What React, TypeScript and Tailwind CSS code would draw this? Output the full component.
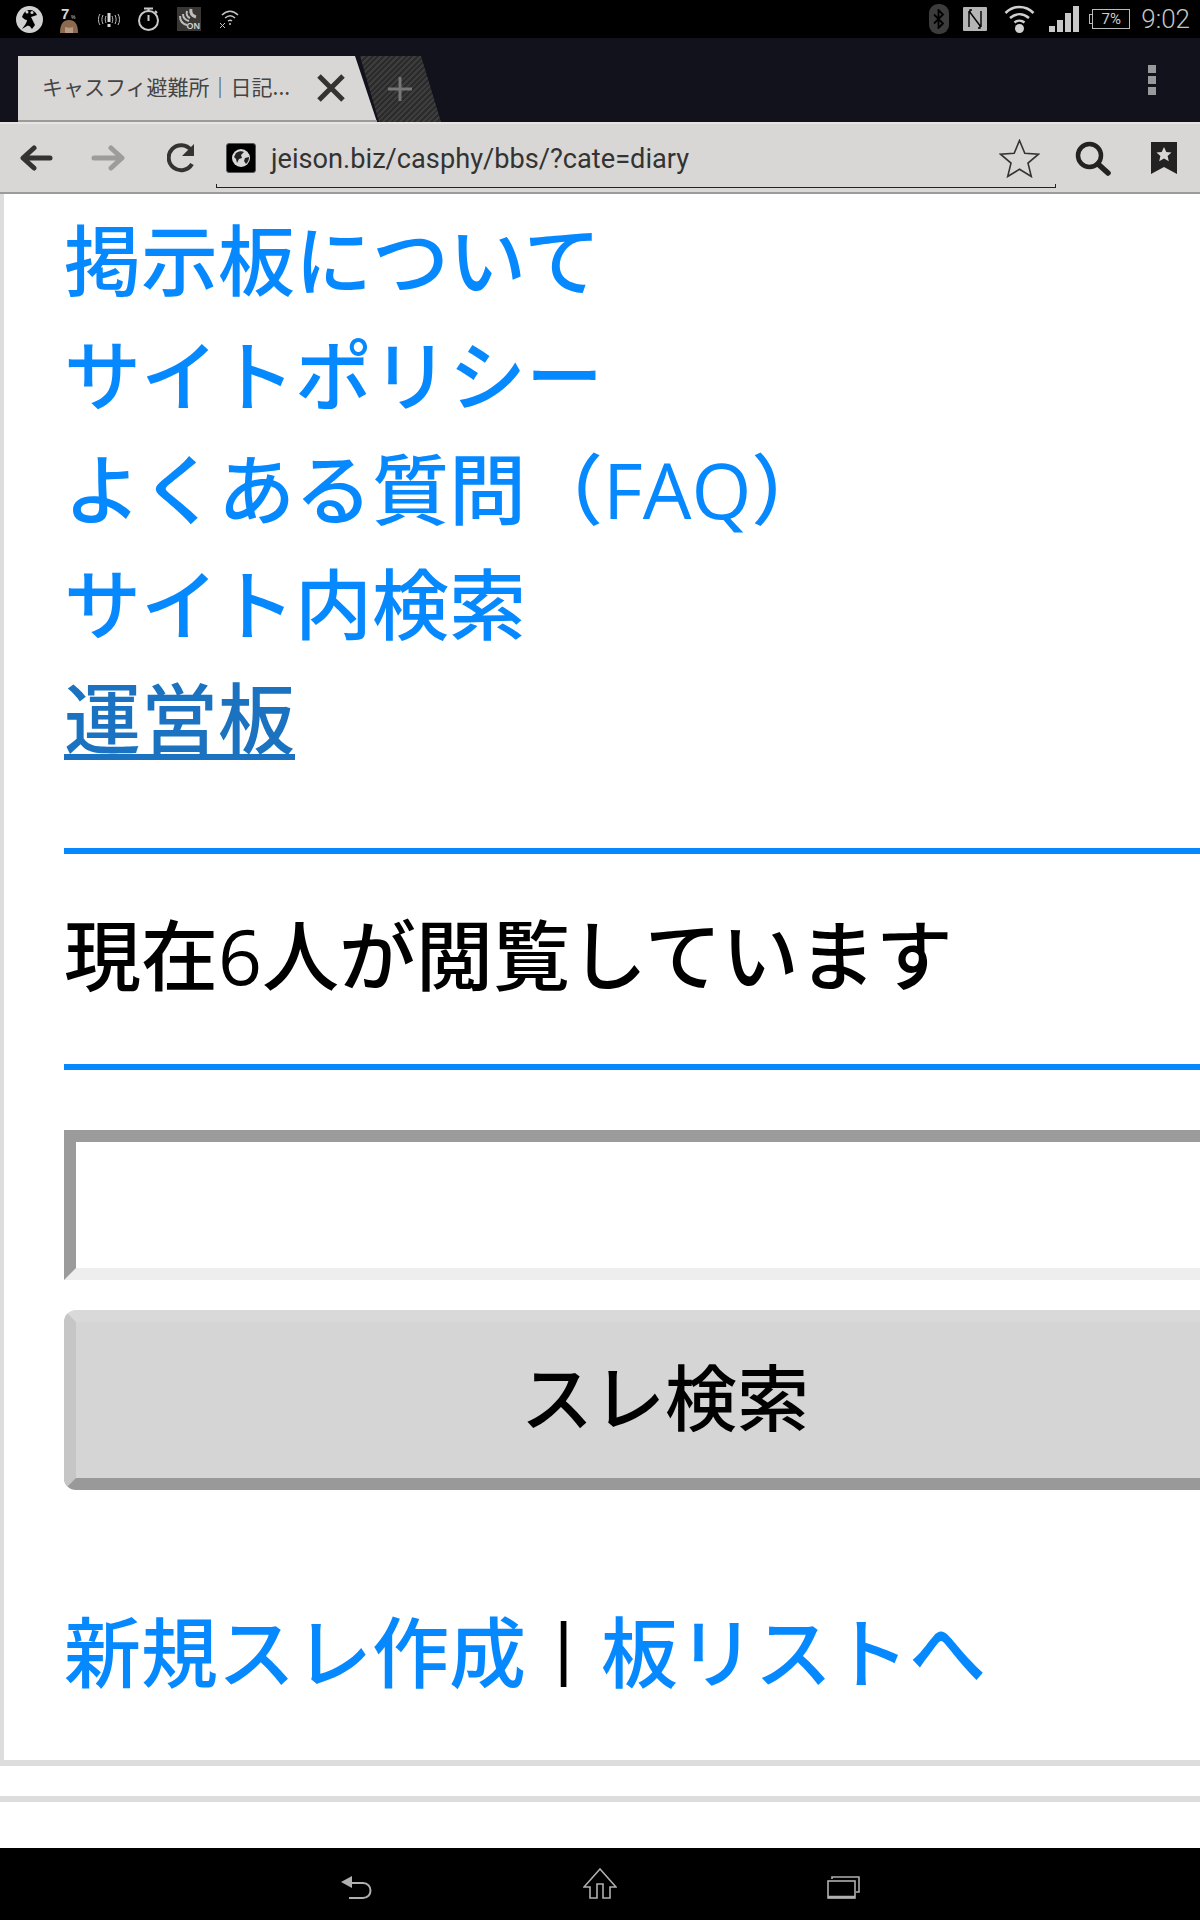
const cjk = "font-['Open_Sans','Noto_Sans_CJK_JP',sans-serif]";

function StatusLeft() {
  return (
    <div className="flex items-center pl-[16px]">
      {/* app icon */}
      <svg width="27" height="27" viewBox="0 0 27 27">
        <circle cx="13.5" cy="13.5" r="13.5" fill="#d0d0d0" />
        <path d="M6 11c2-5 4-7 8-7 3 0 6 2 7 5l-6 2 4 8-3 4c-2-3-3-4-5-3l-5 3c2-3 5-6 5-9-2 0-3-1-5-3z" fill="#000" />
        <circle cx="11" cy="6" r="1.5" fill="#d0d0d0" />
        <circle cx="16" cy="6.5" r="1.5" fill="#d0d0d0" />
      </svg>
      {/* 7% with character */}
      <svg className="ml-[17px]" width="18" height="27" viewBox="0 0 18 27">
        <text x="1" y="13" fontSize="15" fontWeight="700" fill="#d8d8d8" fontFamily="Liberation Sans, sans-serif">7</text>
        <text x="11" y="13" fontSize="5" fill="#d8d8d8" fontFamily="Liberation Sans, sans-serif">%</text>
        <path d="M0 27c0-9 3-13 9-13s9 4 9 13z" fill="#8c6a4f" />
        <path d="M5 27v-6c3 1 6 1 8 0v6z" fill="#b89a82" />
      </svg>
      {/* vibrate alert */}
      <svg className="ml-[19px]" width="24" height="15" viewBox="0 0 24 15" fill="none" stroke="#bdbdbd" strokeWidth="1">
        <path d="M3 2c-2 3-2 8 0 11M6 3c-1.500 3-1.500 6 0 9M9 4c-1 2-1 5 0 7M21 2c2 3 2 8 0 11M18 3c1.500 3 1.500 6 0 9M15 4c1 2 1 5 0 7" />
        <path d="M12 1v9" stroke="#d8d8d8" strokeWidth="3" />
        <path d="M12 12v3" stroke="#d8d8d8" strokeWidth="3" />
      </svg>
      {/* stopwatch */}
      <svg className="ml-[16px]" width="23" height="24" viewBox="0 0 23 24" fill="none" stroke="#c8c8c8" strokeWidth="2">
        <circle cx="11.500" cy="13.500" r="9.500" />
        <path d="M11.500 8v6M7 1.500h9M11.500 1.500v3M18 4l2 2" />
      </svg>
      {/* NFC on tile */}
      <div className="ml-[17px] relative w-[24px] h-[24px] bg-[#3a3634]">
        <svg width="24" height="24" viewBox="0 0 24 24" fill="none" stroke="#bdbdbd">
          <path d="M3 9c0 5 3 8 7 9" strokeWidth="2" />
          <path d="M6 7c0 4 2 6 6 7" strokeWidth="2" />
          <path d="M14 2c-1 4 1 7 5 8" strokeWidth="3" />
          <path d="M10 4c-1 3 0 6 3 7" strokeWidth="2" />
        </svg>
        <span className="absolute right-[1px] bottom-[0px] font-['Liberation_Sans',sans-serif] text-[9px] leading-[10px] font-bold text-[#cfcfcf]">ON</span>
      </div>
      {/* wifi hotspot */}
      <svg className="ml-[18px]" width="21" height="20" viewBox="0 0 21 20" fill="none" stroke="#c4c4c4" strokeWidth="1.500">
        <path d="M3 6c5-5 11-5 16 0M6 9c3.500-3 7-3 10 0M9 12c1.500-1 3-1 4 0" />
        <circle cx="11" cy="15" r="1" fill="#c4c4c4" stroke="none" />
        <path d="M1 14l5 5M6 14l-5 5" strokeWidth="1" />
      </svg>
    </div>
  );
}

function StatusRight() {
  return (
    <div className="flex items-center ml-auto pr-[10px]">
      {/* bluetooth */}
      <div className="w-[20px] h-[30px] rounded-[9px] bg-[#3c3c3c] flex items-center justify-center">
        <svg width="12" height="20" viewBox="0 0 12 20" fill="none" stroke="#000" strokeWidth="1.800">
          <path d="M1 5.500l9 9-4.500 4.500V1L10 5.500l-9 9" />
        </svg>
      </div>
      {/* N mark */}
      <svg className="ml-[14px]" width="24" height="24" viewBox="0 0 24 24">
        <rect x="0" y="0" width="24" height="24" rx="1" fill="#b5b5b5" />
        <path d="M6 4v16M18 4v16M6 4l12 16M9 3h-2v2M15 21h2v-2" fill="none" stroke="#000" strokeWidth="1.400" />
      </svg>
      {/* wifi */}
      <svg className="ml-[17px]" width="31" height="28" viewBox="0 0 31 28" fill="none" stroke="#d0d0d0" strokeWidth="2.500">
        <path d="M1.500 8c8-8 20-8 28 0M6 13c6-5 13-5 19 0M10.500 17.500c3-2.500 7-2.500 10 0" />
        <circle cx="15.500" cy="23.500" r="4.500" fill="#d0d0d0" stroke="none" />
      </svg>
      {/* signal */}
      <div className="ml-[14px] flex items-end gap-[2px] h-[26px]">
        <div className="w-[6px] h-[6px] bg-[#c8c8c8]" />
        <div className="w-[6px] h-[12px] bg-[#c8c8c8]" />
        <div className="w-[6px] h-[19px] bg-[#c8c8c8]" />
        <div className="w-[6px] h-[26px] bg-[#c8c8c8]" />
      </div>
      {/* battery */}
      <div className="ml-[10px] flex items-center">
        <div className="w-[3px] h-[10px] border border-r-0 border-[#bbb]" />
        <div className="w-[38px] h-[20px] border border-[#bbb] flex items-center justify-center font-['Roboto',sans-serif] text-[15px] leading-none text-[#ccc]">7%</div>
      </div>
      <span className="ml-[11px] font-['Roboto',sans-serif] font-light text-[26px] leading-none text-[#c4c4c4]">9:02</span>
    </div>
  );
}

function TabStrip() {
  return (
    <div className="flex h-[84px] pt-[18px] pl-[18px] bg-[#11121b]">
      <div className="w-[359px] h-[66px] flex items-center bg-[#d8d7d5] border-b-2 border-[#9a9a9a] [clip-path:polygon(0_0,337px_0,359px_100%,0_100%)]">
        <span className="ml-[24px] mb-[4px] w-[275px] whitespace-nowrap text-[21px] leading-none text-[#444] font-['Noto_Sans_CJK_JP',sans-serif]">キャスフィ避難所｜日記...</span>
        <svg width="28" height="28" viewBox="0 0 28 28" fill="none" stroke="#333" strokeWidth="5">
          <path d="M2 2l24 24M26 2L2 26" />
        </svg>
      </div>
      <div className="-ml-[17px] w-[81px] h-[66px] pr-[2px] flex items-center justify-center [clip-path:polygon(0_0,61px_0,81px_100%,19px_100%)] bg-[repeating-linear-gradient(135deg,#2b2b2b_0px,#2b2b2b_2px,#3d3d3d_2px,#3d3d3d_4px)]">
        <svg width="26" height="26" viewBox="0 0 26 26" stroke="#777" strokeWidth="3">
          <path d="M13 1v24M1 13h24" />
        </svg>
      </div>
      <div className="ml-auto mr-[44px] mt-[9px] flex flex-col gap-[3px]">
        <div className="w-[8px] h-[8px] bg-[#999]" />
        <div className="w-[8px] h-[8px] bg-[#999]" />
        <div className="w-[8px] h-[8px] bg-[#999]" />
      </div>
    </div>
  );
}

function Toolbar() {
  return (
    <div className="flex h-[72px] items-center bg-[#d8d7d5] border-t-2 border-[#e6e5e3] border-b-2 border-b-[#9b9b9b] relative">
      <svg className="ml-[20px]" width="33" height="28" viewBox="0 0 33 28" fill="none" stroke="#333" strokeWidth="5" strokeLinecap="round" strokeLinejoin="round">
        <path d="M30 14H4M14 4L3 14l11 10" />
      </svg>
      <svg className="ml-[38px]" width="34" height="28" viewBox="0 0 34 28" fill="none" stroke="#9c9c9c" strokeWidth="5" strokeLinecap="round" strokeLinejoin="round">
        <path d="M3 14h26M20 4l11 10-11 10" />
      </svg>
      <svg className="ml-[42px]" width="29" height="30" viewBox="0 0 29 30" fill="none" stroke="#333" strokeWidth="4">
        <path d="M25 21a12.500 12.500 0 1 1-1-14" />
        <path d="M27 1v12H15z" fill="#333" stroke="none" />
      </svg>
      <div className="ml-[30px] w-[30px] h-[30px] rounded-[3px] bg-black border border-[#555] flex items-center justify-center">
        <svg width="20" height="20" viewBox="0 0 20 20">
          <circle cx="10" cy="10" r="9" fill="#d8d8d8" />
          <path d="M5 5c3-2 6-2 8-1l-3 3 1 3-3 1-2 4-1-4-2-2zM14 10l4-1c0 3-1 5-3 7l-2-3z" fill="#222" />
        </svg>
      </div>
      <span className="ml-[15px] mt-[4px] whitespace-nowrap font-['Roboto',sans-serif] text-[27.2px] leading-none text-[#333]">jeison.biz/casphy/bbs/?cate=diary</span>
      <svg className="ml-auto" width="41" height="39" viewBox="0 0 41 39" fill="none" stroke="#333" strokeWidth="1.600" strokeLinejoin="miter">
        <path d="M20.500 1.500l5.300 12.700 13.700 1-10.500 8.900 3.300 13.400-11.800-7.200-11.800 7.200 3.300-13.400L1.500 15.200l13.700-1z" />
      </svg>
      <svg className="ml-[35px]" width="36" height="35" viewBox="0 0 36 35" fill="none" stroke="#222" strokeLinecap="round">
        <circle cx="14.500" cy="14.500" r="11.500" strokeWidth="4.500" />
        <path d="M23 23l10 9" strokeWidth="5.500" />
      </svg>
      <svg className="ml-[40px] mr-[23px]" width="26" height="32" viewBox="0 0 26 32">
        <path d="M0 0h26v32l-13-7-13 7z" fill="#222" />
        <path d="M13 5l2.300 5 5.200.500-3.900 3.500 1.200 5.200-4.800-2.700-4.800 2.700 1.200-5.200-3.900-3.500 5.200-.500z" fill="#d8d7d5" />
      </svg>
      {/* omnibox underline */}
      <div className="absolute left-[216px] top-[60px] w-[840px] h-[4px] border-b border-x border-[#222]" />
    </div>
  );
}

function PageContent() {
  const links = ['掲示板について', 'サイトポリシー', 'よくある質問（FAQ）', 'サイト内検索'];
  return (
    <div className={`flex-1 overflow-hidden bg-white font-medium ${cjk}`}>
      <div className="w-[1400px] h-[1572px] border-l-4 border-b-[6px] border-[#dddddd] pl-[60px] pt-[10px]">
        <div className="w-[1202px] text-[77px] leading-[114.500px]">
          {links.map((label) => (
            <div key={label} className="text-[#0689ff] whitespace-nowrap">{label}</div>
          ))}
          <div className="text-[#1a72c0] underline decoration-[6px] underline-offset-[6px]">運営板</div>

          <div className="mt-[71px] h-[6px] bg-[#0689ff]" />
          <div className="pt-[45px] pb-[51px] text-black whitespace-nowrap">現在6人が閲覧しています</div>
          <div className="h-[6px] bg-[#0689ff]" />

          <div className="mt-[60px] h-[150px] border-[12px] border-t-[#9b9b9b] border-l-[#9b9b9b] border-r-[#eeeeee] border-b-[#eeeeee] bg-white" />
          <div className="mt-[30px] h-[180px] pb-[6px] rounded-[12px] border-[12px] border-t-[#d9d9d9] border-l-[#c6c6c6] border-r-[#c6c6c6] border-b-[#999999] bg-[#d5d5d5] flex items-center justify-center text-[72px] text-black">スレ検索</div>

          <div className="mt-[106px] flex whitespace-nowrap text-black">
            <span className="text-[#0689ff]">新規スレ作成</span>
            <span className="-mt-[5px] w-[75px] text-center font-['Liberation_Sans',sans-serif] font-normal text-[70px]">|</span>
            <span className="text-[#0689ff]">板リストへ</span>
          </div>
        </div>
      </div>
      <div className="mt-[30px] h-[6px] bg-[#dddddd]" />
    </div>
  );
}

function NavBar() {
  return (
    <div className="h-[72px] bg-black flex items-start">
      <svg className="ml-[341px] mt-[27px]" width="32" height="24" viewBox="0 0 32 24" fill="none" stroke="#b0b0b0" strokeWidth="2">
        <path d="M10 8h12c10 0 10 15 0 15H8" />
        <path d="M0 7l11-6v12z" fill="#b0b0b0" stroke="none" />
      </svg>
      <svg className="ml-[210px] mt-[20px]" width="34" height="31" viewBox="0 0 34 31" fill="none" stroke="#b0b0b0" strokeWidth="1.600">
        <path d="M17 1L1 19h6v11h7V16h6v14h7V19h6z" />
      </svg>
      <svg className="ml-[210px] mt-[28px]" width="33" height="23" viewBox="0 0 33 23" fill="none" stroke="#b0b0b0" strokeWidth="1.600">
        <path d="M5 3V1h27v15h-3" />
        <rect x="1" y="5" width="27" height="17" />
        <path d="M1 21h27" strokeWidth="2.500" />
      </svg>
    </div>
  );
}

export default function App() {
  return (
    <div className="w-[1200px] h-[1920px] flex flex-col overflow-hidden bg-white">
      <div className="h-[38px] bg-black flex items-center">
        <StatusLeft />
        <StatusRight />
      </div>
      <TabStrip />
      <Toolbar />
      <PageContent />
      <NavBar />
    </div>
  );
}
